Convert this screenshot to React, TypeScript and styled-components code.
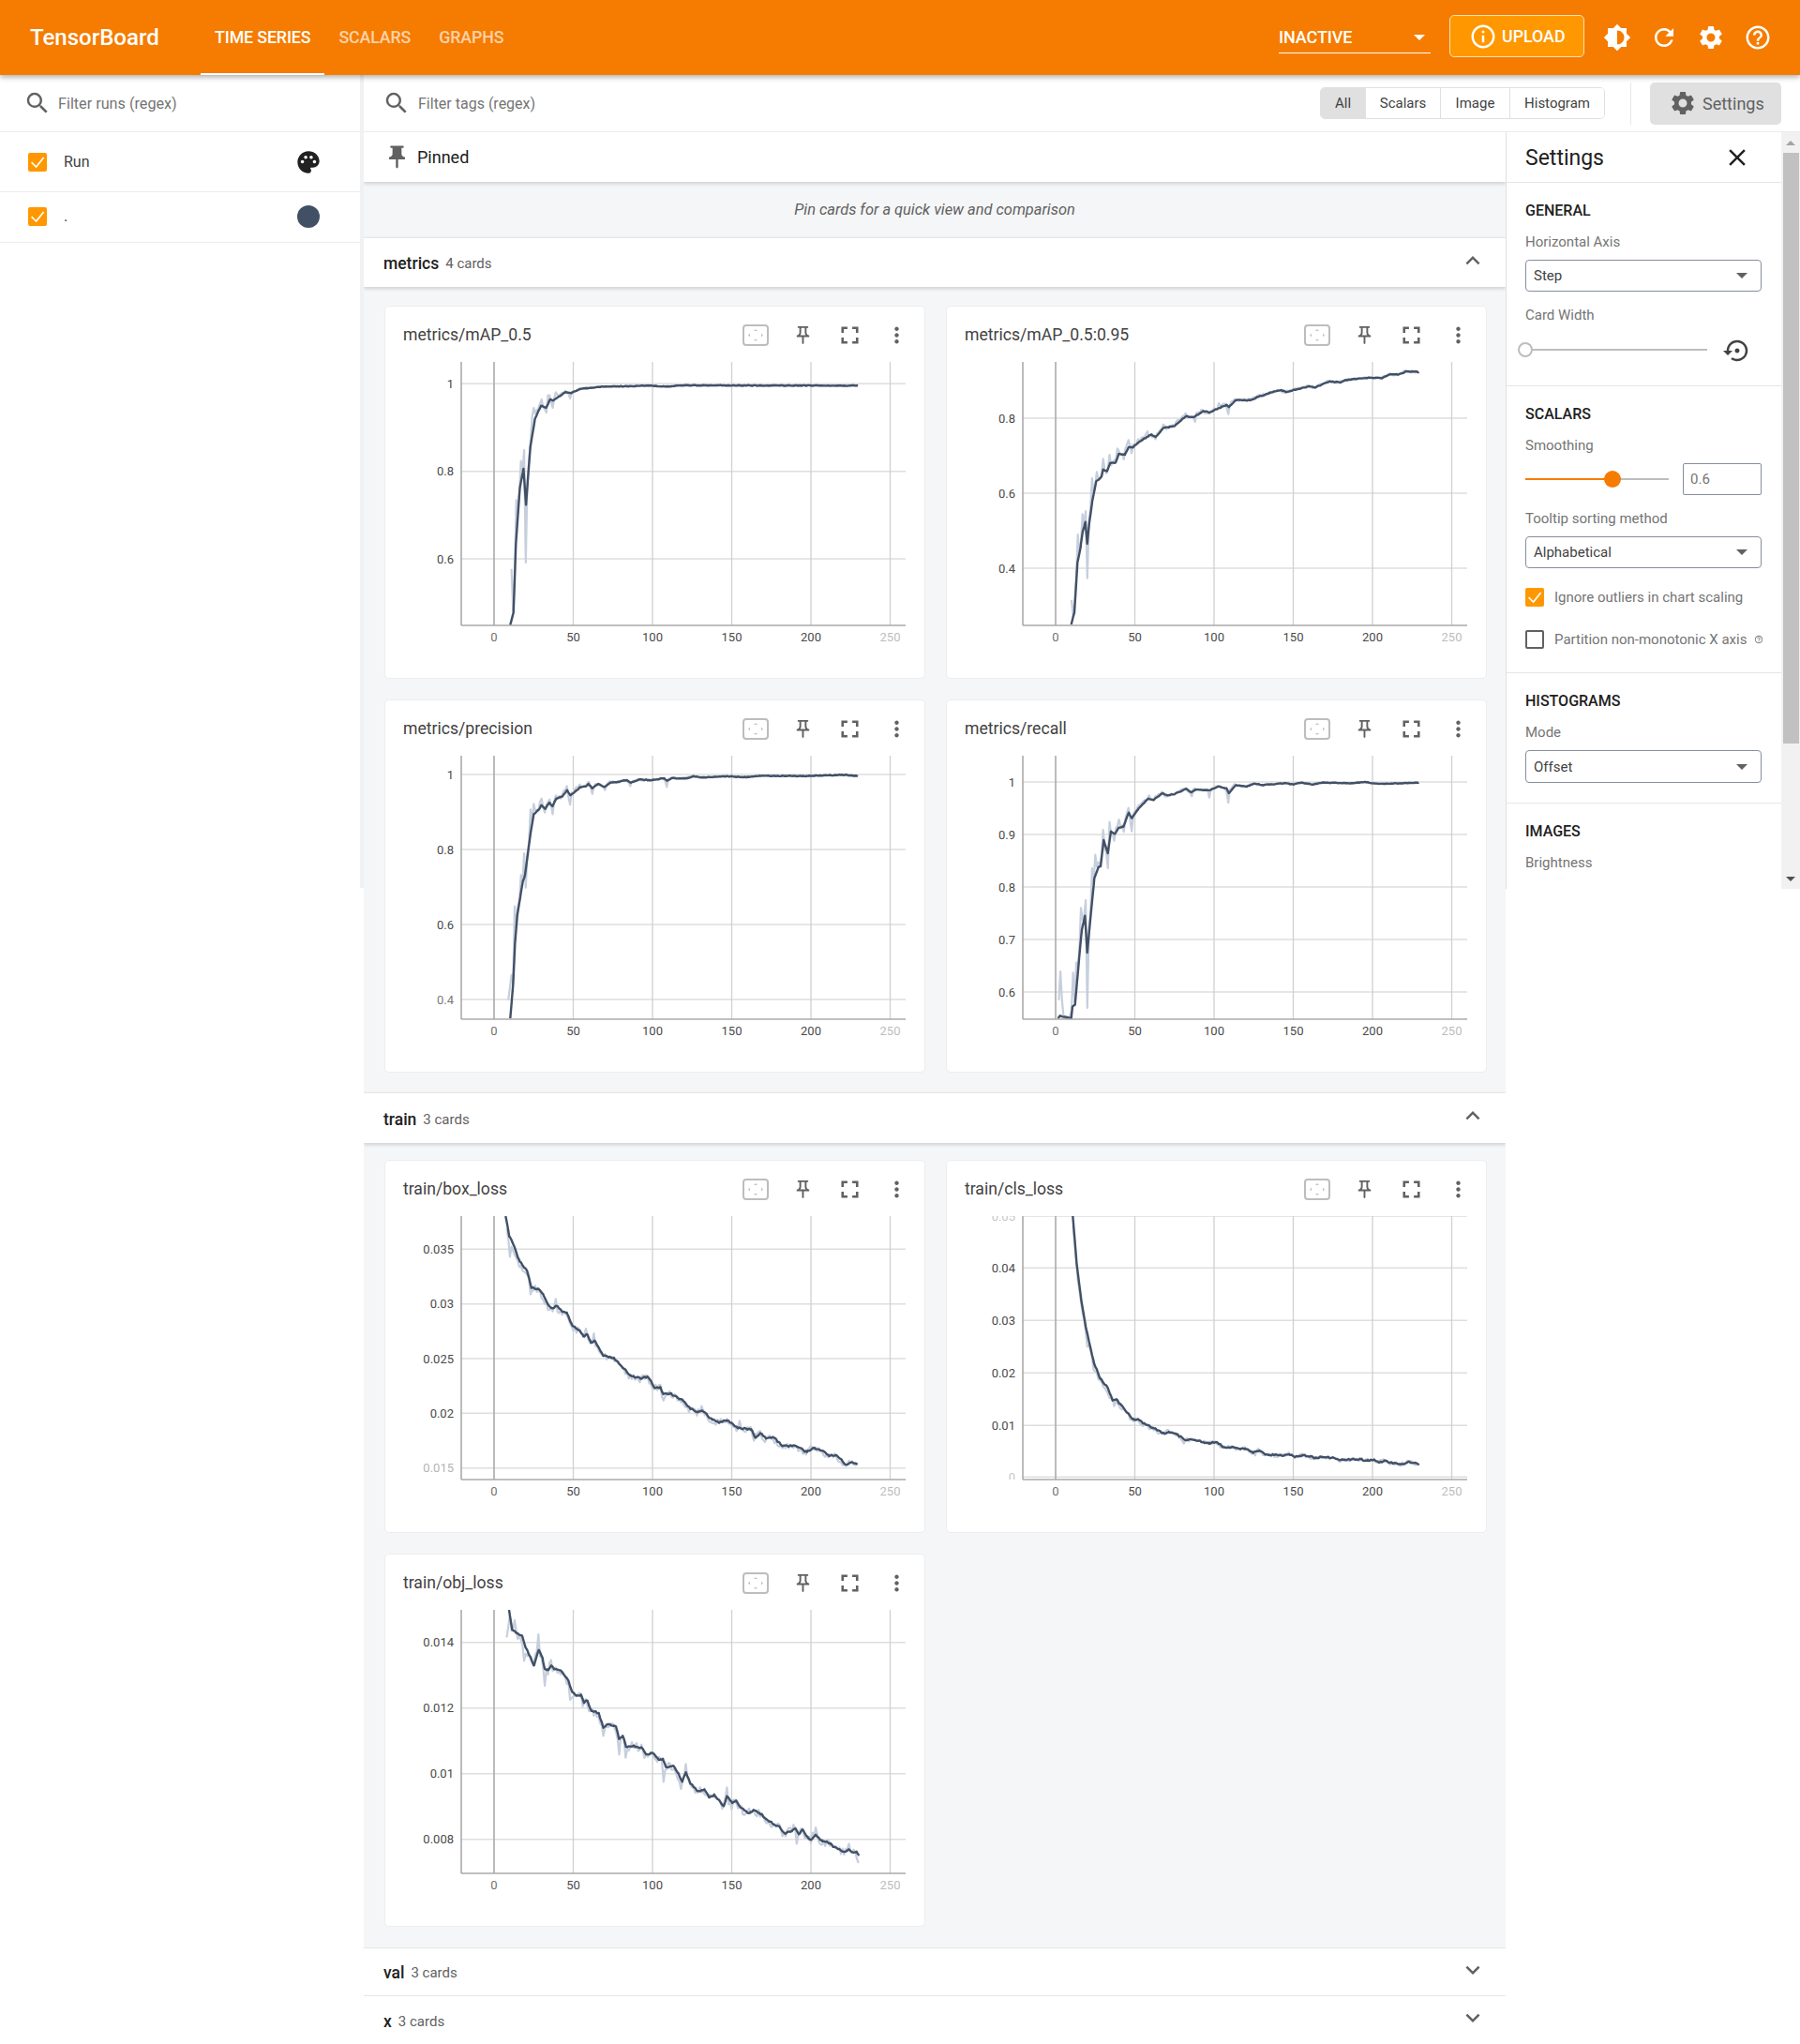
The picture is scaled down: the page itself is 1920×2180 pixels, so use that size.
import React from "react";
import styled, { createGlobalStyle } from "styled-components";
import {
  MdBrightness6,
  MdClose,
  MdExpandLess,
  MdExpandMore,
  MdFullscreen,
  MdHelpOutline,
  MdInfoOutline,
  MdMoreVert,
  MdOutlinePushPin,
  MdPalette,
  MdPushPin,
  MdRefresh,
  MdSearch,
  MdSettings,
  MdSettingsBackupRestore,
} from "react-icons/md";

type Pt = [number, number];

interface Tick {
  label: string;
  at: number;
  fade?: number;
}

interface ChartData {
  title: string;
  seed: number;
  x0: number;
  xs: number;
  y0: number;
  ticks: Tick[];
  line: Pt[];
  spikes: Pt[];
  early: number;
  late: number;
  tau: number;
  jitter: number;
}

const PX_PER_STEP = 1.69;
const ZERO_X = 35;
const PLOT_W = 474;
const PLOT_H = 281;

const GlobalStyle = createGlobalStyle`
  html, body {
    margin: 0;
    padding: 0;
    background: #fff;
    font-family: Roboto, "Liberation Sans", sans-serif;
  }
  * {
    box-sizing: border-box;
  }
`;

const charts: Record<string, ChartData> = {
  map50: {
    title: "metrics/mAP_0.5",
    seed: 11,
    x0: 331,
    xs: 2.613,
    y0: 198,
    ticks: [
      { label: "1", at: 268 },
      { label: "0.8", at: 548 },
      { label: "0.6", at: 828 },
    ],
    line: [
      [376, 1040], [385, 1000], [392, 780], [403, 600], [413, 540], [420, 655], [432, 470], [445, 380],
      [462, 338], [476, 345], [487, 318], [495, 322], [510, 310], [530, 295], [545, 298], [570, 285],
      [600, 281], [630, 277], [700, 276], [760, 274], [815, 277], [850, 273], [1345, 274],
    ],
    spikes: [
      [378, 860], [395, 640], [405, 515], [414, 480], [419, 840], [435, 375], [442, 345], [462, 318],
      [475, 360], [483, 305], [495, 345], [505, 295], [530, 290], [545, 315],
    ],
    early: 4,
    late: 0.2,
    tau: 25,
    jitter: 0.3,
  },
  map95: {
    title: "metrics/mAP_0.5:0.95",
    seed: 23,
    x0: 198,
    xs: 3,
    y0: 18,
    ticks: [
      { label: "0.8", at: 198 },
      { label: "0.6", at: 438 },
      { label: "0.4", at: 678 },
    ],
    line: [
      [248, 858], [258, 820], [268, 660], [278, 610], [285, 560], [293, 530], [299, 600], [306, 530],
      [315, 465], [328, 400], [345, 385], [350, 362], [362, 368], [372, 342], [390, 340], [400, 312],
      [420, 315], [432, 290], [445, 292], [460, 278], [490, 258], [505, 250], [518, 258], [545, 228],
      [560, 228], [580, 222], [615, 192], [640, 195], [670, 175], [690, 180], [745, 155], [752, 163],
      [775, 140], [820, 140], [880, 118], [920, 108], [935, 115], [1010, 96], [1030, 100], [1075, 80],
      [1110, 84], [1125, 76], [1200, 68], [1240, 70], [1270, 58], [1295, 58], [1320, 48], [1360, 50],
    ],
    spikes: [
      [248, 780], [268, 570], [283, 505], [293, 495], [299, 710], [315, 390], [328, 370], [350, 328],
      [362, 375], [370, 315], [395, 295], [415, 330], [432, 268], [442, 310], [490, 240], [545, 218],
      [615, 182], [645, 210], [720, 150], [750, 185],
    ],
    early: 4,
    late: 0.7,
    tau: 50,
    jitter: 0.45,
  },
  precision: {
    title: "metrics/precision",
    seed: 37,
    x0: 201,
    xs: 3,
    y0: 18,
    ticks: [
      { label: "1", at: 78 },
      { label: "0.8", at: 318 },
      { label: "0.6", at: 558 },
      { label: "0.4", at: 798, fade: 0.7 },
    ],
    line: [
      [253, 858], [262, 750], [268, 620], [275, 530], [285, 470], [293, 420], [300, 400], [308, 340],
      [318, 265], [328, 205], [345, 190], [352, 176], [365, 188], [378, 168], [388, 180], [400, 155],
      [420, 148], [435, 128], [445, 145], [455, 138], [475, 120], [495, 116], [503, 108], [515, 122],
      [535, 108], [555, 118], [575, 104], [595, 103], [625, 96], [640, 104], [665, 94], [695, 96],
      [705, 96], [745, 90], [755, 98], [770, 90], [815, 90], [840, 84], [865, 88], [950, 84],
      [1010, 87], [1050, 82], [1200, 83], [1330, 79], [1365, 84],
    ],
    spikes: [
      [248, 800], [255, 720], [268, 500], [285, 400], [296, 330], [300, 440], [318, 190], [328, 172],
      [352, 155], [365, 200], [378, 158], [388, 205], [400, 145], [435, 115], [443, 175], [503, 102],
      [515, 140], [555, 128], [635, 115], [752, 118],
    ],
    early: 4,
    late: 0.4,
    tau: 38,
    jitter: 0.35,
  },
  recall: {
    title: "metrics/recall",
    seed: 41,
    x0: 198,
    xs: 3,
    y0: 18,
    ticks: [
      { label: "1", at: 102 },
      { label: "0.9", at: 270 },
      { label: "0.8", at: 438 },
      { label: "0.7", at: 606 },
      { label: "0.6", at: 774 },
    ],
    line: [
      [205, 858], [212, 850], [232, 855], [248, 858], [252, 820], [260, 815], [272, 680], [282, 575],
      [292, 530], [299, 648], [314, 490], [322, 410], [335, 375], [342, 372], [352, 288], [365, 330],
      [375, 260], [388, 268], [400, 248], [415, 245], [432, 200], [442, 218], [465, 185], [495, 155],
      [510, 160], [540, 138], [555, 145], [580, 140], [617, 124], [632, 135], [645, 127], [692, 128],
      [720, 116], [745, 122], [752, 138], [775, 112], [810, 117], [835, 107], [860, 112], [930, 106],
      [960, 110], [985, 104], [1020, 110], [1050, 104], [1150, 106], [1190, 102], [1230, 108], [1360, 104],
    ],
    spikes: [
      [207, 800], [215, 708], [218, 800], [252, 712], [265, 680], [280, 505], [292, 480], [299, 825],
      [315, 378], [325, 335], [350, 255], [365, 378], [372, 230], [388, 290], [400, 222], [415, 262],
      [430, 185], [440, 260], [465, 175], [495, 145], [632, 148], [692, 152], [750, 168],
    ],
    early: 4,
    late: 0.3,
    tau: 32,
    jitter: 0.3,
  },
  box: {
    title: "train/box_loss",
    seed: 53,
    x0: 371,
    xs: 2.53,
    y0: 170,
    ticks: [
      { label: "0.035", at: 276 },
      { label: "0.03", at: 451 },
      { label: "0.025", at: 626 },
      { label: "0.02", at: 801 },
      { label: "0.015", at: 976, fade: 0.4 },
    ],
    line: [
      [402, 170], [412, 235], [425, 265], [440, 315], [460, 345], [472, 400], [490, 402], [505, 425],
      [520, 458], [530, 465], [540, 458], [555, 476], [568, 482], [582, 520], [602, 535], [612, 555],
      [622, 548], [632, 575], [642, 568], [665, 615], [680, 622], [695, 624], [718, 655], [740, 680],
      [765, 690], [785, 683], [805, 720], [820, 718], [828, 740], [850, 740], [880, 760], [900, 785],
      [920, 798], [932, 792], [960, 822], [980, 830], [1000, 824], [1030, 848], [1065, 852], [1075, 878],
      [1090, 865], [1105, 882], [1125, 878], [1150, 905], [1185, 905], [1215, 925], [1232, 912], [1260, 922],
      [1275, 938], [1295, 935], [1320, 965], [1335, 958], [1352, 964],
    ],
    spikes: [[413, 300], [470, 420], [538, 435], [618, 530], [640, 545], [828, 760], [930, 778], [1035, 825]],
    early: 3,
    late: 2.2,
    tau: 80,
    jitter: 0.8,
  },
  cls: {
    title: "train/cls_loss",
    seed: 67,
    x0: 198,
    xs: 3,
    y0: 22,
    ticks: [
      { label: "0.05", at: 22, fade: 0.3 },
      { label: "0.04", at: 188 },
      { label: "0.03", at: 356 },
      { label: "0.02", at: 524 },
      { label: "0.01", at: 692 },
      { label: "0", at: 857, fade: 0.3 },
    ],
    line: [
      [253, 22], [265, 170], [280, 290], [295, 380], [320, 490], [340, 540], [365, 572], [380, 612],
      [392, 608], [415, 635], [445, 672], [460, 672], [480, 686], [510, 700], [545, 718], [560, 712],
      [585, 720], [612, 738], [640, 738], [670, 745], [690, 748], [710, 745], [740, 762], [765, 760],
      [790, 768], [805, 765], [830, 780], [850, 772], [870, 785], [920, 788], [945, 784], [965, 792],
      [995, 786], [1030, 796], [1050, 792], [1090, 796], [1110, 802], [1175, 800], [1195, 805], [1215, 802],
      [1235, 810], [1250, 804], [1275, 812], [1305, 816], [1330, 808], [1360, 814],
    ],
    spikes: [[270, 230], [300, 440], [322, 515], [385, 630], [610, 750], [835, 788]],
    early: 2,
    late: 1.3,
    tau: 60,
    jitter: 0.7,
  },
  obj: {
    title: "train/obj_loss",
    seed: 71,
    x0: 260,
    xs: 3,
    y0: 22,
    ticks: [
      { label: "0.014", at: 126 },
      { label: "0.012", at: 336 },
      { label: "0.01", at: 546 },
      { label: "0.008", at: 756 },
    ],
    line: [
      [308, 22], [318, 85], [330, 95], [350, 105], [360, 140], [388, 200], [403, 150], [415, 175],
      [422, 210], [433, 215], [443, 200], [455, 212], [475, 218], [498, 248], [510, 285], [525, 296],
      [538, 293], [548, 320], [558, 312], [572, 345], [595, 352], [610, 398], [625, 388], [650, 395],
      [660, 435], [672, 425], [682, 460], [710, 458], [735, 465], [745, 482], [770, 482], [790, 502],
      [800, 498], [810, 525], [835, 522], [850, 545], [862, 572], [874, 542], [888, 578], [912, 602],
      [933, 596], [948, 622], [965, 615], [995, 650], [1005, 618], [1022, 640], [1035, 632], [1050, 655],
      [1075, 672], [1090, 662], [1110, 672], [1150, 705], [1175, 718], [1192, 738], [1225, 722], [1235, 740],
      [1248, 725], [1265, 752], [1275, 758], [1290, 742], [1310, 762], [1335, 768], [1345, 780], [1380, 796],
      [1395, 788], [1410, 798], [1420, 795], [1428, 808],
    ],
    spikes: [
      [303, 110], [325, 55], [357, 185], [402, 100], [420, 265], [505, 310], [610, 425], [660, 485],
      [682, 495], [803, 572], [860, 595], [872, 515], [1005, 590], [1022, 660], [1230, 770], [1290, 718],
      [1395, 770], [1425, 832],
    ],
    early: 4,
    late: 3,
    tau: 80,
    jitter: 0.8,
  },
};

const seeded = (seed: number) => {
  let s = seed;
  return () => {
    s = (s + 0x6d2b79f5) | 0;
    let t = Math.imul(s ^ (s >>> 15), 1 | s);
    t = (t + Math.imul(t ^ (t >>> 7), 61 | t)) ^ t;
    return ((t ^ (t >>> 14)) >>> 0) / 4294967296;
  };
};

const toPoints = (pts: Pt[]) => pts.map(([x, y]) => `${x.toFixed(1)},${y.toFixed(1)}`).join(" ");

// anchors come in zoomed pixels, the rest of the steps get filled in with noise
const buildSeries = (c: ChartData) => {
  const rand = seeded(c.seed);
  const anchors: Pt[] = c.line.map(([zx, zy]) => [(zx - c.x0) / c.xs / PX_PER_STEP, (zy - c.y0) / 3]);
  const smooth: Pt[] = [];
  const raw = new Map<number, number>();
  anchors.forEach(([step, y], i) => {
    smooth.push([step, y]);
    const next = anchors[i + 1];
    if (!next) return;
    const slope = (next[1] - y) / (next[0] - step);
    // the raw line runs ahead of the smoothed one
    const lead = Math.max(-4, Math.min(4, slope * 1.2));
    for (let s = Math.ceil(step); s < next[0]; s++) {
      const base = y + slope * (s - step);
      const amp = 1.4 * (c.late + (c.early - c.late) * Math.exp(-s / c.tau));
      if (s > step + 0.2) smooth.push([s, base + (rand() - 0.5) * c.jitter * 2.4]);
      raw.set(s, base + lead + (rand() - 0.5) * amp * 2);
    }
  });
  c.spikes.forEach(([zx, zy]) => {
    raw.set(Math.round((zx - c.x0) / c.xs / PX_PER_STEP), (zy - c.y0) / 3);
  });
  const toXY = ([s, y]: Pt): Pt => [ZERO_X + s * PX_PER_STEP, y];
  const rawPts = [...raw.entries()].sort((a, b) => a[0] - b[0]).map((p) => toXY(p as Pt));
  return { smooth: toPoints(smooth.map(toXY)), raw: toPoints(rawPts) };
};

const Page = styled.div`
  width: 1920px;
  height: 2180px;
  overflow: hidden;
  background: #fff;
  color: #212121;
`;

const TopNav = styled.header`
  position: relative;
  z-index: 3;
  height: 80px;
  display: flex;
  align-items: center;
  padding-right: 20px;
  background: #f57c00;
  color: #fff;
  box-shadow: 0 2px 6px rgba(0, 0, 0, 0.35);
`;

const Brand = styled.div`
  width: 214px;
  padding-left: 32px;
  font-size: 24px;
  font-weight: 500;
`;

const NavTabs = styled.nav`
  display: flex;
  height: 80px;
  flex: 1;
`;

const NavTab = styled.div<{ $active?: boolean }>`
  display: flex;
  align-items: center;
  padding: 0 15px;
  font-size: 17.8px;
  font-weight: 500;
  letter-spacing: -0.12px;
  opacity: ${(p) => (p.$active ? 1 : 0.65)};
  border-bottom: 2px solid ${(p) => (p.$active ? "#fff" : "transparent")};
`;

const RunFilter = styled.div`
  width: 162px;
  height: 37px;
  margin: 20px 20px 0 0;
  align-self: flex-start;
  display: flex;
  align-items: center;
  justify-content: space-between;
  padding: 3px 6px 0 0;
  border-bottom: 1px solid #fff;
  font-size: 18px;
  font-weight: 500;
  letter-spacing: -0.1px;
`;

const Caret = styled.span<{ $color?: string; $size?: number }>`
  display: block;
  width: 0;
  height: 0;
  border-left: ${(p) => p.$size ?? 6}px solid transparent;
  border-right: ${(p) => p.$size ?? 6}px solid transparent;
  border-top: ${(p) => p.$size ?? 6}px solid ${(p) => p.$color ?? "#fff"};
`;

const UploadButton = styled.div`
  width: 144px;
  height: 45px;
  margin: -3px 10px 0 0;
  display: flex;
  align-items: center;
  gap: 5px;
  padding-left: 20px;
  background: #ff9800;
  border: 1px solid #ffe0b2;
  border-radius: 5px;
  font-size: 17.8px;
  font-weight: 500;
  svg {
    flex: none;
  }
`;

const NavIcon = styled.div`
  width: 50px;
  display: flex;
  justify-content: center;
`;

const Shell = styled.div`
  display: flex;
  align-items: flex-start;
`;

const Sidebar = styled.aside`
  flex: none;
  width: 388px;
  height: 867px;
  border-right: 4px solid #f0f1f2;
`;

const SearchBar = styled.div<{ $pad: number }>`
  height: 61px;
  display: flex;
  align-items: center;
  gap: 7px;
  padding-left: ${(p) => p.$pad}px;
  border-bottom: 1px solid #ebebeb;
  color: #616161;
  font-size: 16.2px;
  span {
    color: #757575;
  }
`;

const RunRow = styled.div<{ $h: number; $lift?: number }>`
  height: ${(p) => p.$h}px;
  display: flex;
  align-items: center;
  padding: 0 0 ${(p) => p.$lift ?? 0}px 30px;
  border-bottom: 1px solid #ebebeb;
`;

const RunName = styled.span`
  flex: 1;
  margin-left: 18px;
  font-size: 16px;
  color: #424242;
`;

const RunMark = styled.div`
  width: 30px;
  margin-right: 40px;
  display: flex;
  justify-content: center;
  color: #212121;
`;

const ColorDot = styled.span`
  width: 24px;
  height: 24px;
  border-radius: 50%;
  background: #425066;
`;

const Box = styled.span<{ $checked?: boolean }>`
  flex: none;
  width: 20px;
  height: 20px;
  border-radius: 2px;
  display: block;
  background: ${(p) => (p.$checked ? "#ff9800" : "transparent")};
  border: ${(p) => (p.$checked ? "none" : "2px solid #616161")};
`;

const Checkbox = ({ checked }: { checked?: boolean }) => (
  <Box $checked={checked}>
    {checked && (
      <svg width="20" height="20" viewBox="0 0 20 20">
        <polyline points="3.6,10.2 8.6,15 16.6,5" fill="none" stroke="#fff" strokeWidth="1.6" />
      </svg>
    )}
  </Box>
);

const Workspace = styled.div`
  flex: 1;
  min-width: 0;
`;

const FilterBar = styled.div`
  height: 61px;
  display: flex;
  align-items: center;
  padding: 0 20px 0 20px;
  border-bottom: 1px solid #ebebeb;
`;

const TagSearch = styled.div`
  flex: 1;
  display: flex;
  align-items: center;
  gap: 8px;
  color: #616161;
  font-size: 16px;
  span {
    color: #757575;
  }
`;

const Chips = styled.div`
  display: flex;
  height: 34px;
  border: 1px solid #e0e0e0;
  border-radius: 5px;
  overflow: hidden;
`;

const Chip = styled.div<{ $w: number; $on?: boolean }>`
  width: ${(p) => p.$w}px;
  display: flex;
  align-items: center;
  justify-content: center;
  font-size: 15px;
  color: #424242;
  background: ${(p) => (p.$on ? "#e0e0e0" : "#fff")};
  border-right: 1px solid #e0e0e0;
  &:last-child {
    border-right: none;
  }
`;

const BarRule = styled.div`
  width: 1px;
  height: 45px;
  margin: 0 20px 0 27px;
  background: #e8e8e8;
`;

const SettingsToggle = styled.div`
  width: 140px;
  height: 45px;
  display: flex;
  align-items: center;
  gap: 6px;
  padding-left: 20px;
  background: #e0e0e0;
  border-radius: 5px;
  color: #616161;
  font-size: 18px;
`;

const Content = styled.div`
  display: flex;
  align-items: flex-start;
`;

const Main = styled.main`
  flex: none;
  width: 1218px;
  overflow: hidden;
`;

const PinnedHead = styled.div`
  position: relative;
  height: 53px;
  display: flex;
  align-items: center;
  gap: 7px;
  padding-left: 21px;
  font-size: 18px;
  background: #fff;
  box-shadow: 0 2px 4px rgba(0, 0, 0, 0.16);
  svg {
    color: #616161;
  }
`;

const PinnedHint = styled.div`
  height: 59px;
  display: flex;
  align-items: center;
  justify-content: center;
  background: #f5f6f7;
  font-size: 16.4px;
  font-style: italic;
  color: #616161;
`;

const GroupHead = styled.div<{ $h: number; $shadow?: boolean }>`
  position: relative;
  height: ${(p) => p.$h}px;
  display: flex;
  align-items: center;
  padding: 2px 20px 0 21px;
  background: #fff;
  border-top: 1px solid #e6e6e6;
  box-shadow: ${(p) => (p.$shadow ? "0 2px 4px rgba(0, 0, 0, 0.16)" : "none")};
`;

const GroupName = styled.span`
  font-size: 17.5px;
  font-weight: 500;
  color: #212121;
`;

const GroupCount = styled.span`
  flex: 1;
  margin-left: 7px;
  font-size: 15px;
  color: #616161;
`;

const Chevron = styled.div`
  margin-bottom: 7px;
  display: flex;
  color: #616161;
`;

const CardGrid = styled.div<{ $top: number; $bottom: number }>`
  display: grid;
  grid-template-columns: 577px 577px;
  gap: 22px;
  padding: ${(p) => p.$top}px 22px ${(p) => p.$bottom}px;
  background: #f5f6f7;
`;

const Card = styled.section`
  height: 398px;
  background: #fff;
  border: 1px solid #ebedf0;
  border-radius: 5px;
  margin: 0;
`;

const CardHead = styled.div`
  height: 59px;
  display: flex;
  align-items: center;
  padding: 1px 0 0 19px;
`;

const CardTitle = styled.h3`
  flex: 1;
  margin: 0;
  font-size: 17.6px;
  font-weight: 400;
  color: #424242;
`;

const CardAction = styled.div<{ $muted?: boolean }>`
  width: 50px;
  display: flex;
  align-items: center;
  justify-content: center;
  color: ${(p) => (p.$muted ? "#bdbdbd" : "#616161")};
`;

const CardActions = styled.div`
  display: flex;
  margin-right: 5px;
`;

const ChartSvg = styled.svg`
  display: block;
  margin-left: -1px;
  overflow: hidden;
  text {
    font-family: Roboto, "Liberation Sans", sans-serif;
    font-size: 13px;
    fill: #424242;
  }
`;

const FitIcon = () => (
  <svg width="28" height="23" viewBox="0 0 28 23">
    <rect x="1" y="1" width="26" height="21" rx="3" fill="none" stroke="#bdbdbd" strokeWidth="2" />
    <path d="M14 5l2 2h-4zM14 18l2-2h-4zM6 11.5l2-2v4zM22 11.5l-2-2v4z" fill="#c4c4c4" />
  </svg>
);

const Chart = ({ data }: { data: ChartData }) => {
  const series = React.useMemo(() => buildSeries(data), [data]);
  const steps = [0, 50, 100, 150, 200, 250];
  const clip = `clip-${data.seed}`;
  return (
    <ChartSvg width="577" height="338" viewBox="-82 0 577 338">
      <defs>
        <clipPath id={clip}>
          <rect x="0" y="0" width={PLOT_W} height={PLOT_H} />
        </clipPath>
      </defs>
      {data.ticks.map((t) => {
        const y = (t.at - data.y0) / 3;
        return <line key={t.label} x1="0" x2={PLOT_W} y1={y} y2={y} stroke="#dedede" strokeWidth="1.5" />;
      })}
      {steps.map((s) => {
        const x = ZERO_X + s * PX_PER_STEP;
        return (
          <line
            key={s}
            x1={x}
            x2={x}
            y1="0"
            y2={PLOT_H}
            stroke={s === 0 ? "#aaa" : "#d0d0d0"}
            strokeWidth={s === 0 ? 1.6 : 1.3}
          />
        );
      })}
      <g clipPath={`url(#${clip})`}>
        <polyline points={series.raw} fill="none" stroke="#c6cfdd" strokeWidth="2.2" strokeLinejoin="round" />
        <polyline points={series.smooth} fill="none" stroke="#425066" strokeWidth="2.4" strokeLinejoin="round" />
      </g>
      <line x1="0" x2="0" y1="0" y2={PLOT_H} stroke="#aaa" strokeWidth="1.6" />
      <line x1="0" x2={PLOT_W} y1={PLOT_H} y2={PLOT_H} stroke="#aaa" strokeWidth="1.4" />
      <svg x="-82" y="0" width="82" height={PLOT_H}>
        {data.ticks.map((t) => (
          <text key={t.label} x="74" y={(t.at - data.y0) / 3 + 4.5} textAnchor="end" opacity={t.fade ?? 0.95}>
            {t.label}
          </text>
        ))}
      </svg>
      {steps.map((s) => (
        <text
          key={s}
          x={ZERO_X + s * PX_PER_STEP}
          y="298"
          textAnchor="middle"
          opacity={s === 250 ? 0.35 : s === 0 ? 0.75 : 0.95}
        >
          {s}
        </text>
      ))}
    </ChartSvg>
  );
};

const ChartCard = ({ data }: { data: ChartData }) => (
  <Card>
    <CardHead>
      <CardTitle>{data.title}</CardTitle>
      <CardActions>
        <CardAction $muted>
          <FitIcon />
        </CardAction>
        <CardAction>
          <MdOutlinePushPin size={23} />
        </CardAction>
        <CardAction>
          <MdFullscreen size={31} />
        </CardAction>
        <CardAction>
          <MdMoreVert size={27} />
        </CardAction>
      </CardActions>
    </CardHead>
    <Chart data={data} />
  </Card>
);

const SettingsPane = styled.aside`
  flex: none;
  width: 314px;
  height: 807px;
  display: flex;
  overflow: hidden;
  border-left: 1px solid #e0e0e0;
`;

const SettingsBody = styled.div`
  flex: none;
  width: 293px;
`;

const SettingsHead = styled.div`
  height: 54px;
  display: flex;
  align-items: center;
  justify-content: space-between;
  padding: 1px 32px 0 20px;
  border-bottom: 1px solid #e6e6e6;
  font-size: 23px;
  color: #212121;
`;

const SettingsGroup = styled.div<{ $bottom: number }>`
  padding: 20px 21px ${(p) => p.$bottom}px 20px;
  border-bottom: 1px solid #e6e6e6;
`;

const GroupHeading = styled.div`
  height: 20px;
  line-height: 20px;
  font-size: 16px;
  font-weight: 500;
  color: #212121;
`;

const FieldLabel = styled.div<{ $top?: number }>`
  height: 20px;
  line-height: 20px;
  margin-top: ${(p) => p.$top ?? 13}px;
  font-size: 15px;
  color: #757575;
`;

const SelectBox = styled.div<{ $h?: number }>`
  height: ${(p) => p.$h ?? 34}px;
  margin-top: 9px;
  display: flex;
  align-items: center;
  justify-content: space-between;
  padding: 0 14px 0 8px;
  border: 1px solid #868e9c;
  border-radius: 4px;
  font-size: 15px;
  color: #424242;
`;

const SliderRow = styled.div<{ $top: number }>`
  height: 34px;
  margin-top: ${(p) => p.$top}px;
  display: flex;
  align-items: center;
`;

const Track = styled.div<{ $w: number }>`
  position: relative;
  flex: none;
  width: ${(p) => p.$w}px;
  height: 2px;
  background: #bdbdbd;
`;

const TrackFill = styled.div<{ $w: number }>`
  height: 2px;
  width: ${(p) => p.$w}px;
  background: #f57c00;
`;

const Thumb = styled.span<{ $at: number; $empty?: boolean }>`
  position: absolute;
  top: 50%;
  left: ${(p) => p.$at}px;
  width: ${(p) => (p.$empty ? 16 : 18)}px;
  height: ${(p) => (p.$empty ? 16 : 18)}px;
  transform: translate(-50%, -50%);
  border-radius: 50%;
  background: ${(p) => (p.$empty ? "#fff" : "#f57c00")};
  border: ${(p) => (p.$empty ? "2px solid #bdbdbd" : "none")};
`;

const ResetIcon = styled.div`
  margin: 2px 0 0 17px;
  display: flex;
  color: #424242;
`;

const ValueInput = styled.div`
  width: 84px;
  height: 34px;
  margin-left: 15px;
  display: flex;
  align-items: center;
  padding-left: 7px;
  border: 1px solid #868e9c;
  border-radius: 2px;
  font-size: 15px;
  color: #757575;
`;

const CheckRow = styled.div<{ $top: number }>`
  height: 20px;
  margin-top: ${(p) => p.$top}px;
  display: flex;
  align-items: center;
  gap: 11px;
  font-size: 15px;
  color: #757575;
  white-space: nowrap;
`;

const Hint = styled.span`
  display: flex;
  margin-left: -3px;
  color: #757575;
`;

const Scrollbar = styled.div`
  flex: none;
  width: 20px;
  height: 807px;
  display: flex;
  flex-direction: column;
  align-items: center;
  background: #f1f1f1;
  padding: 9px 0 8px;
`;

const ScrollArrow = styled.span<{ $down?: boolean }>`
  flex: none;
  width: 0;
  height: 0;
  border-left: 5px solid transparent;
  border-right: 5px solid transparent;
  border-bottom: ${(p) => (p.$down ? "none" : "5px solid #a3a3a3")};
  border-top: ${(p) => (p.$down ? "5px solid #505050" : "none")};
`;

const ScrollThumb = styled.div`
  flex: none;
  width: 17px;
  height: 630px;
  margin: 8px 0 auto;
  background: #c1c1c1;
`;

const App = () => {
  return (
    <Page>
      <GlobalStyle />
      <TopNav>
        <Brand>TensorBoard</Brand>
        <NavTabs>
          <NavTab $active>TIME SERIES</NavTab>
          <NavTab>SCALARS</NavTab>
          <NavTab>GRAPHS</NavTab>
        </NavTabs>
        <RunFilter>
          INACTIVE
          <Caret />
        </RunFilter>
        <UploadButton>
          <MdInfoOutline size={30} />
          UPLOAD
        </UploadButton>
        <NavIcon>
          <MdBrightness6 size={30} />
        </NavIcon>
        <NavIcon>
          <MdRefresh size={30} />
        </NavIcon>
        <NavIcon>
          <MdSettings size={30} />
        </NavIcon>
        <NavIcon>
          <MdHelpOutline size={30} />
        </NavIcon>
      </TopNav>

      <Shell>
        <Sidebar>
          <SearchBar $pad={25}>
            <MdSearch size={30} />
            <span>Filter runs (regex)</span>
          </SearchBar>
          <RunRow $h={64}>
            <Checkbox checked />
            <RunName>Run</RunName>
            <RunMark>
              <MdPalette size={28} />
            </RunMark>
          </RunRow>
          <RunRow $h={54} $lift={2}>
            <Checkbox checked />
            <RunName>.</RunName>
            <RunMark>
              <ColorDot />
            </RunMark>
          </RunRow>
        </Sidebar>

        <Workspace>
          <FilterBar>
            <TagSearch>
              <MdSearch size={30} />
              <span>Filter tags (regex)</span>
            </TagSearch>
            <Chips>
              <Chip $w={48} $on>
                All
              </Chip>
              <Chip $w={80}>Scalars</Chip>
              <Chip $w={74}>Image</Chip>
              <Chip $w={100}>Histogram</Chip>
            </Chips>
            <BarRule />
            <SettingsToggle>
              <MdSettings size={30} />
              Settings
            </SettingsToggle>
          </FilterBar>

          <Content>
            <Main>
              <PinnedHead>
                <MdPushPin size={29} />
                Pinned
              </PinnedHead>
              <PinnedHint>Pin cards for a quick view and comparison</PinnedHint>

              <GroupHead $h={53} $shadow>
                <GroupName>metrics</GroupName>
                <GroupCount>4 cards</GroupCount>
                <Chevron>
                  <MdExpandLess size={30} />
                </Chevron>
              </GroupHead>
              <CardGrid $top={20} $bottom={21}>
                <ChartCard data={charts.map50} />
                <ChartCard data={charts.map95} />
                <ChartCard data={charts.precision} />
                <ChartCard data={charts.recall} />
              </CardGrid>

              <GroupHead $h={54} $shadow>
                <GroupName>train</GroupName>
                <GroupCount>3 cards</GroupCount>
                <Chevron>
                  <MdExpandLess size={30} />
                </Chevron>
              </GroupHead>
              <CardGrid $top={18} $bottom={22}>
                <ChartCard data={charts.box} />
                <ChartCard data={charts.cls} />
                <ChartCard data={charts.obj} />
              </CardGrid>

              <GroupHead $h={51}>
                <GroupName>val</GroupName>
                <GroupCount>3 cards</GroupCount>
                <Chevron>
                  <MdExpandMore size={30} />
                </Chevron>
              </GroupHead>
              <GroupHead $h={52}>
                <GroupName>x</GroupName>
                <GroupCount>3 cards</GroupCount>
                <Chevron>
                  <MdExpandMore size={30} />
                </Chevron>
              </GroupHead>
            </Main>

            <SettingsPane>
              <SettingsBody>
                <SettingsHead>
                  Settings
                  <MdClose size={30} />
                </SettingsHead>
                <SettingsGroup $bottom={21}>
                  <GroupHeading>GENERAL</GroupHeading>
                  <FieldLabel>Horizontal Axis</FieldLabel>
                  <SelectBox>
                    Step
                    <Caret $color="#616161" />
                  </SelectBox>
                  <FieldLabel $top={15}>Card Width</FieldLabel>
                  <SliderRow $top={10}>
                    <Track $w={194}>
                      <Thumb $at={0} $empty />
                    </Track>
                    <ResetIcon>
                      <MdSettingsBackupRestore size={30} />
                    </ResetIcon>
                  </SliderRow>
                </SettingsGroup>
                <SettingsGroup $bottom={25}>
                  <GroupHeading>SCALARS</GroupHeading>
                  <FieldLabel>Smoothing</FieldLabel>
                  <SliderRow $top={9}>
                    <Track $w={153}>
                      <TrackFill $w={93} />
                      <Thumb $at={93} />
                    </Track>
                    <ValueInput>0.6</ValueInput>
                  </SliderRow>
                  <FieldLabel $top={15}>Tooltip sorting method</FieldLabel>
                  <SelectBox>
                    Alphabetical
                    <Caret $color="#616161" />
                  </SelectBox>
                  <CheckRow $top={21}>
                    <Checkbox checked />
                    Ignore outliers in chart scaling
                  </CheckRow>
                  <CheckRow $top={25}>
                    <Checkbox />
                    Partition non-monotonic X axis
                    <Hint>
                      <MdHelpOutline size={10} />
                    </Hint>
                  </CheckRow>
                </SettingsGroup>
                <SettingsGroup $bottom={21}>
                  <GroupHeading>HISTOGRAMS</GroupHeading>
                  <FieldLabel>Mode</FieldLabel>
                  <SelectBox $h={35}>
                    Offset
                    <Caret $color="#616161" />
                  </SelectBox>
                </SettingsGroup>
                <SettingsGroup $bottom={20}>
                  <GroupHeading>IMAGES</GroupHeading>
                  <FieldLabel>Brightness</FieldLabel>
                </SettingsGroup>
              </SettingsBody>
              <Scrollbar>
                <ScrollArrow />
                <ScrollThumb />
                <ScrollArrow $down />
              </Scrollbar>
            </SettingsPane>
          </Content>
        </Workspace>
      </Shell>
    </Page>
  );
};

export default App;
